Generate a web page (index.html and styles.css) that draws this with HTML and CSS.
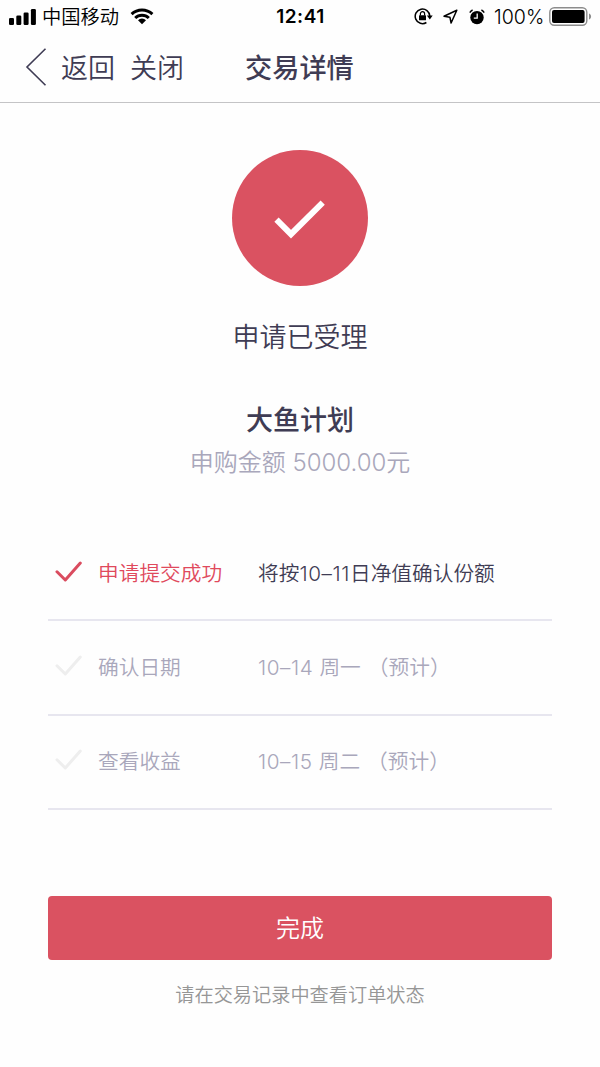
FILE: index.html
```
<!doctype html>
<html lang="zh-CN">
<head>
	<meta charset="UTF-8">
	<title>交易详情</title>
	<link rel="stylesheet" href="styles.css">
</head>
<body>
	<div class="status">
		<div class="status-left">
			<svg class="signal" width="27" height="16" viewBox="0 0 27 16">
				<rect x="0" y="9" width="5" height="7" rx="1.3"/>
				<rect x="7.3" y="6.5" width="5" height="9.5" rx="1.3"/>
				<rect x="14.6" y="3.5" width="5" height="12.5" rx="1.3"/>
				<rect x="21.9" y="0" width="5" height="16" rx="1.3"/>
			</svg>
			<span class="carrier">中国移动</span>
			<svg class="wifi" width="24" height="17" viewBox="0 0 24 17">
				<path d="M1.6 6.2a15 15 0 0 1 20.8 0M5.2 10a9.8 9.8 0 0 1 13.6 0" fill="none" stroke="#000" stroke-width="3"/>
				<path d="M8 12.2a5.8 5.8 0 0 1 8 0l-4 4z"/>
			</svg>
		</div>
		<div class="time">12:41</div>
		<div class="status-right">
			<svg class="lock" width="19" height="17" viewBox="0 0 19 17">
				<path d="M12.4 14.5A7.3 7.3 0 1 1 15.8 8" fill="none" stroke="#000" stroke-width="1.5"/>
				<path d="M12.9 7.6h5.8l-2.9 4z"/>
				<rect x="5" y="7.3" width="7" height="5" rx=".6"/>
				<path d="M6.4 7.5V5.8a2.1 2.1 0 0 1 4.2 0v1.7" fill="none" stroke="#000" stroke-width="1.2"/>
			</svg>
			<svg class="arrow" width="15" height="15" viewBox="0 0 15 15">
				<path d="M13.8 1.2L1 7.2l5.9 1 1.2 5.8z" fill="none" stroke="#000" stroke-width="1.5" stroke-linejoin="round"/>
			</svg>
			<svg class="alarm" width="16" height="16" viewBox="0 0 16 16">
				<circle cx="8" cy="8.6" r="6.7"/>
				<path d="M.8 3.6A6 6 0 0 1 3.6 1M12.4 1a6 6 0 0 1 2.8 2.6" fill="none" stroke="#000" stroke-width="1.4"/>
				<path d="M8.2 4.6v4.6H4.8" fill="none" stroke="#fff" stroke-width="1.3"/>
			</svg>
			<span class="percent">100%</span>
			<svg class="battery" width="43" height="19" viewBox="0 0 43 19">
				<rect x=".8" y=".8" width="37" height="17.4" rx="4.5" fill="#fff" stroke="#8c8c8c" stroke-width="1.4"/>
				<rect x="3" y="3" width="32.6" height="13" rx="2"/>
				<path d="M40 6.5c2.8.8 2.8 5.2 0 6z" fill="#8c8c8c"/>
			</svg>
		</div>
	</div>
	<div class="nav">
		<svg class="back" width="22" height="40" viewBox="0 0 22 40">
			<path d="M20.5 1.7L2 20l18.5 18.3" fill="none" stroke="#3f3c54" stroke-width="1.6"/>
		</svg>
		<span class="nav-item">返回</span>
		<span class="nav-item">关闭</span>
		<span class="nav-title">交易详情</span>
	</div>
	<div class="result">
		<div class="circle">
			<svg width="52" height="40" viewBox="0 0 52 40">
				<path d="M2.5 19.6L17 34.2 48.7 2.7" fill="none" stroke="#fff" stroke-width="6"/>
			</svg>
		</div>
		<div class="state">申请已受理</div>
		<div class="name">大鱼计划</div>
		<div class="amount">申购金额 5000.00元</div>
	</div>
	<div class="steps">
		<div class="step active">
			<svg class="tick" width="28" height="22" viewBox="0 0 28 22"><path d="M2 10.8l8.3 8.2L25.3 2"/></svg>
			<span class="label">申请提交成功</span>
			<span class="text">将按<span class="num">10–11</span>日净值确认份额</span>
		</div>
		<div class="step">
			<svg class="tick" width="28" height="22" viewBox="0 0 28 22"><path d="M2 10.8l8.3 8.2L25.3 2"/></svg>
			<span class="label">确认日期</span>
			<span class="text"><span class="num date">10–14</span>周一<span class="guess">（预计）</span></span>
		</div>
		<div class="step">
			<svg class="tick" width="28" height="22" viewBox="0 0 28 22"><path d="M2 10.8l8.3 8.2L25.3 2"/></svg>
			<span class="label">查看收益</span>
			<span class="text"><span class="num date">10–15</span>周二<span class="guess">（预计）</span></span>
		</div>
	</div>
	<button class="done">完成</button>
	<div class="hint">请在交易记录中查看订单状态</div>
</body>
</html>
```
FILE: styles.css
```
*{
	box-sizing: border-box;
}
body{
	margin: 0;
	background: #fefefe;
	color: #3f3c54;
	font-family: Inter, "Noto Sans CJK SC", sans-serif;
	font-weight: 350;
}
svg{
	display: block;
	flex: none;
}
.status{
	display: grid;
	grid-template-columns: 1fr auto 1fr;
	align-items: center;
	height: 33px;
	padding: 0 8px 0 9px;
	color: #000;
	white-space: nowrap;
}
.status-left,.status-right{
	display: flex;
	align-items: center;
}
.status-right{
	justify-content: flex-end;
}
.carrier{
	margin-left: 6px;
	font-size: 19.3px;
	line-height: 30px;
}
.wifi{
	margin-left: 11px;
}
.time{
	font-size: 19px;
	font-weight: 600;
	letter-spacing: .5px;
}
.arrow{
	margin-left: 10px;
}
.alarm{
	margin-left: 11px;
}
.percent{
	width: 50px;
	margin-left: 9px;
	font-size: 19.6px;
}
.battery{
	margin-left: 5px;
}
.nav{
	display: grid;
	grid-template-columns: 22px 54px 54px 1fr;
	align-items: center;
	height: 70px;
	padding: 0 0 2px 25px;
	border-bottom: 1px solid #c4c4c6;
	font-size: 27px;
	line-height: 40px;
}
.nav-item{
	padding: 4px 0 0 14px;
	white-space: nowrap;
}
.nav-item + .nav-item{
	padding-left: 29px;
}
.nav-title{
	padding: 4px 0 0 90px;
	font-size: 27.2px;
	font-weight: 500;
}
.result{
	display: flex;
	flex-direction: column;
	align-items: center;
	padding-top: 47px;
}
.circle{
	display: flex;
	align-items: center;
	justify-content: center;
	width: 136px;
	height: 136px;
	padding-top: 4px;
	border-radius: 50%;
	background: #da5261;
}
.state{
	margin-top: 32px;
	font-size: 27px;
	line-height: 40px;
}
.name{
	margin-top: 43px;
	font-size: 27px;
	line-height: 40px;
	font-weight: 500;
}
.amount{
	margin-top: 4px;
	font-size: 24px;
	line-height: 36px;
	color: #a9a7bb;
}
.steps{
	margin: 46px 48px 0;
}
.step{
	display: grid;
	grid-template-columns: 50px 160px 1fr;
	align-items: center;
	height: 94.3px;
	padding-bottom: 3px;
	border-bottom: 2px solid #e7e6ef;
	color: #a9a7bb;
	font-size: 20.7px;
	white-space: nowrap;
}
.tick{
	margin-left: 7px;
	fill: none;
	stroke: #eee;
	stroke-width: 3;
	stroke-linecap: round;
	stroke-linejoin: round;
}
.active .label{
	color: #e0495c;
}
.active .text{
	color: #3f3c54;
}
.active .tick{
	stroke: #da4c5f;
}
.num{
	letter-spacing: .6px;
}
.date{
	margin-right: 6px;
}
.guess{
	margin-left: 7px;
}
.done{
	display: block;
	width: 504px;
	height: 64px;
	margin: 86px auto 0;
	padding: 0 0 2px;
	border: 0;
	border-radius: 4px;
	background: #da5261;
	color: #fff;
	font: inherit;
	font-size: 24px;
}
.hint{
	margin-top: 20px;
	font-size: 19.2px;
	line-height: 30px;
	text-align: center;
	color: #969696;
}
```
